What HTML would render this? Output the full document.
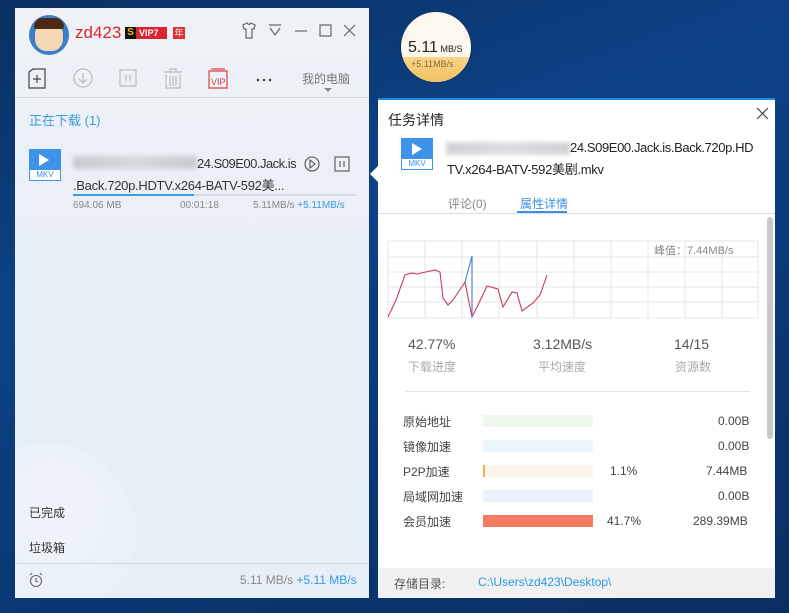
<!DOCTYPE html>
<html><head><meta charset="utf-8"><style>
*{margin:0;padding:0;box-sizing:border-box}
html,body{width:789px;height:613px;overflow:hidden}
body{position:relative;font-family:"Liberation Sans","Noto Sans CJK SC",sans-serif;
background:linear-gradient(160deg,#0a2f62 0%,#0d4286 35%,#0a3a78 60%,#0b2e62 100%);}
.a{position:absolute}
.t{position:absolute;white-space:nowrap}
#left{left:15px;top:8px;width:354px;height:590px;overflow:hidden;background:linear-gradient(180deg,#eef2f7 0%,#e9eff6 40%,#e6eef7 100%);}
#right{left:378px;top:98px;width:397px;height:500px;background:#fff;border-top:2px solid #1e8ae6;}
.gray{color:#888}
</style></head><body>
<div class="a" style="left:401px;top:12px;width:70px;height:70px;border-radius:50%;overflow:hidden;background:#fdf8ee;box-shadow:0 0 2px rgba(0,0,0,.3)">
 <div class="a" style="left:0;top:45px;width:70px;height:25px;background:linear-gradient(#f8d58a,#f3c262)"></div>
 <div class="t" style="left:7px;top:27px;font-size:16px;color:#222">5.11<span style="font-size:9px"> MB/S</span></div>
 <div class="t" style="left:10px;top:47px;font-size:9px;color:#8a6a30">+5.11MB/s</div>
</div>

<div id="left" class="a">
 <div class="a" style="left:-60px;top:435px;width:180px;height:180px;border-radius:50%;background:radial-gradient(circle at 55% 40%,rgba(255,255,255,.35),rgba(220,232,244,.2));"></div>
 <div class="a" style="left:14px;top:7px;width:40px;height:40px;border-radius:50%;background:#3d7ec9"></div>
 <div class="a" style="left:20px;top:13px;width:28px;height:30px;border-radius:45% 45% 40% 40%;background:#f6d8b6"></div>
 <div class="a" style="left:19px;top:10px;width:30px;height:11px;border-radius:12px 12px 3px 3px;background:#4a2a12"></div>
 <div class="t" style="left:60px;top:15px;font-size:17px;color:#d9262f">zd423</div>
 <div class="a" style="left:110px;top:19px;width:42px;height:12px;background:#d9262f"></div>
 <div class="a" style="left:110px;top:19px;width:11px;height:12px;background:#111;color:#f6c000;font-size:10px;font-weight:bold;text-align:center;line-height:12px">S</div>
 <div class="t" style="left:124px;top:19px;font-size:9px;color:#fff;font-weight:bold;line-height:12px">VIP7</div>
 <div class="a" style="left:158px;top:19px;width:12px;height:12px;background:#e03131;color:#fff;font-size:9px;line-height:12px;text-align:center">年</div>
 <svg class="a" style="left:224px;top:14px" width="125" height="18" fill="none" stroke="#666" stroke-width="1.2">
  <path d="M4 3 L8 1 Q10 4 12 1 L16 3 L15 7 L13 7 L13 16 L7 16 L7 7 L5 7 Z"/>
  <path d="M30 3 H42 M31 6 L36 13 L41 6"/>
  <path d="M56 9 H68"/>
  <rect x="81" y="3" width="11" height="11"/>
  <path d="M105 3 L116 14 M116 3 L105 14"/>
 </svg>
 <svg class="a" style="left:10px;top:60px" width="260" height="22" fill="none" stroke-width="1.2">
  <path d="M4 4 L8 1 H20 V20 H4 Z M8 11 H16 M12 7 V15" stroke="#444"/>
  <circle cx="58" cy="10" r="9" stroke="#bbb"/><path d="M58 5 V15 M54 11 L58 15 L62 11" stroke="#bbb"/>
  <rect x="95" y="2" width="16" height="16" stroke="#bbb"/><path d="M101 7 V13 M105 7 V13" stroke="#bbb"/>
  <path d="M139 4 H157 M145 4 V1 H151 V4 M141 6 V20 H155 V6 M145 8 V18 M148 8 V18 M151 8 V18" stroke="#bbb"/>
  <path d="M184 3 H202 V20 H184 Z M186 1 H200" stroke="#e04040"/>
  <text x="186" y="17" font-size="9" fill="#e04040" stroke="none" font-family="Liberation Sans">VIP</text>
  <circle cx="233" cy="12" r="1.3" fill="#444" stroke="none"/><circle cx="239" cy="12" r="1.3" fill="#444" stroke="none"/><circle cx="245" cy="12" r="1.3" fill="#444" stroke="none"/>
 </svg>
 <div class="t" style="left:287px;top:62px;font-size:12px;color:#777">我的电脑</div>
 <div class="a" style="left:309px;top:80px;border:4px solid transparent;border-top:4px solid #888"></div>
 <div class="a" style="left:0;top:89px;width:354px;height:1px;background:#cfd6de"></div>
 <div class="t" style="left:14px;top:102px;font-size:13px;color:#3b9be0">正在下载 (1)</div>
 <div class="a" style="left:14px;top:141px;width:32px;height:32px;background:#3d93e8;border:1px solid #3d93e8"></div>
 <div class="a" style="left:24px;top:146px;border-left:10px solid #fff;border-top:6px solid transparent;border-bottom:6px solid transparent"></div>
 <div class="a" style="left:15px;top:162px;width:30px;height:10px;background:#fff;color:#3d93e8;font-size:8px;text-align:center;line-height:10px">MKV</div>
 <div class="a" style="left:58px;top:148px;width:124px;height:13px;background:linear-gradient(90deg,#c8ccd2,#d6d9dd,#c8ccd2);filter:blur(2px)"></div>
 <div class="t" style="left:182px;top:148px;font-size:13px;letter-spacing:-0.5px;color:#333">24.S09E00.Jack.is</div>
 <div class="t" style="left:58px;top:167px;font-size:13px;letter-spacing:-0.3px;color:#333">.Back.720p.HDTV.x264-BATV-592美...</div>
 <svg class="a" style="left:288px;top:146px" width="50" height="20" fill="none" stroke="#555" stroke-width="1.1">
  <circle cx="9" cy="10" r="7"/><path d="M7 6 L12 10 L7 14 Z"/>
  <rect x="32" y="3" width="14" height="14"/><path d="M37 7 V13 M41 7 V13"/>
 </svg>
 <div class="a" style="left:58px;top:186px;width:283px;height:2px;background:#d5dbe2"></div>
 <div class="a" style="left:58px;top:186px;width:121px;height:2px;background:#3b9be0"></div>
 <div class="t gray" style="left:58px;top:192px;font-size:10px">694.06 MB</div>
 <div class="t gray" style="left:165px;top:192px;font-size:10px">00:01:18</div>
 <div class="t gray" style="left:238px;top:192px;font-size:10px">5.11MB/s <span style="color:#3b9be0">+5.11MB/s</span></div>
 <div class="t" style="left:14px;top:496px;font-size:12px;color:#333">已完成</div>
 <div class="t" style="left:14px;top:531px;font-size:12px;color:#333">垃圾箱</div>
 <div class="a" style="left:0;top:555px;width:354px;height:1px;background:#cfd6de"></div>
 <svg class="a" style="left:13px;top:564px" width="16" height="16" fill="none" stroke="#666" stroke-width="1.1"><circle cx="8" cy="9" r="5.5"/><path d="M8 6 V9 L10 10 M2 3 L4 1 M14 3 L12 1"/></svg>
 <div class="t gray" style="left:225px;top:565px;font-size:12px">5.11 MB/s <span style="color:#3b9be0">+5.11 MB/s</span></div>
</div>
<div class="a" style="left:370px;top:166px;border-right:8px solid #fff;border-top:8px solid transparent;border-bottom:8px solid transparent"></div>

<div id="right" class="a">
 <div class="t" style="left:10px;top:10px;font-size:14px;color:#222">任务详情</div>
 <svg class="a" style="left:378px;top:7px" width="14" height="14" stroke="#444" stroke-width="1.2"><path d="M1 1 L12 12 M12 1 L1 12"/></svg>
 <div class="a" style="left:23px;top:38px;width:32px;height:32px;background:#3d93e8;border:1px solid #3d93e8"></div>
 <div class="a" style="left:34px;top:43px;border-left:10px solid #fff;border-top:6px solid transparent;border-bottom:6px solid transparent"></div>
 <div class="a" style="left:24px;top:59px;width:30px;height:10px;background:#fff;color:#3d93e8;font-size:8px;text-align:center;line-height:10px">MKV</div>
 <div class="a" style="left:68px;top:42px;width:124px;height:13px;background:linear-gradient(90deg,#d0d2d6,#dcdee1,#d0d2d6);filter:blur(2px)"></div>
 <div class="t" style="left:192px;top:40px;font-size:13px;letter-spacing:-0.4px;color:#222">24.S09E00.Jack.is.Back.720p.HD</div>
 <div class="t" style="left:69px;top:59px;font-size:13px;letter-spacing:-0.3px;color:#222">TV.x264-BATV-592美剧.mkv</div>
 <div class="t gray" style="left:70px;top:95px;font-size:12px">评论(0)</div>
 <div class="t" style="left:142px;top:95px;font-size:12px;color:#3b8fe0">属性详情</div>
 <div class="a" style="left:139px;top:111px;width:50px;height:2px;background:#3b8fe0"></div>
 <div class="a" style="left:0;top:113px;width:397px;height:1px;background:#ddd"></div>
 <div class="a" style="left:389px;top:117px;width:6px;height:222px;border-radius:3px;background:#c9c9c9"></div>
 <svg class="a" style="left:0;top:0" width="385" height="230">
  <g stroke="#e6e6e6" stroke-width="1">
   <path d="M10 141 H380 M10 157 H380 M10 172 H380 M10 187 H380 M10 202 H380 M10 218 H380"/>
   <path d="M10 141 V218 M47 141 V218 M84 141 V218 M121 141 V218 M159 141 V218 M196 141 V218 M233 141 V218 M270 141 V218 M307 141 V218 M344 141 V218 M380 141 V218"/>
  </g>
  <polyline fill="none" stroke="#c83c50" stroke-width="1.1" points="10,217 18,200 27,175 34,173 39,174 57,170 62,172 65,198 70,205 75,200 87,182 94,217 101,203 109,186 120,189 125,207 134,192 139,193 144,211 155,203 162,195 169,175"/>
  <polyline fill="none" stroke="#3b7fe0" stroke-width="1.1" points="87,182 94,156 94,217"/>
  <text x="276" y="154" font-size="11" fill="#888" font-family="Liberation Sans,Noto Sans CJK SC,sans-serif">峰值：7.44MB/s</text>
 </svg>
 <div class="t" style="left:30px;top:236px;font-size:14px;color:#555">42.77%</div>
 <div class="t" style="left:30px;top:258px;font-size:12px;color:#aaa">下载进度</div>
 <div class="t" style="left:155px;top:236px;font-size:14px;color:#555">3.12MB/s</div>
 <div class="t" style="left:160px;top:258px;font-size:12px;color:#aaa">平均速度</div>
 <div class="t" style="left:296px;top:236px;font-size:14px;color:#555">14/15</div>
 <div class="t" style="left:297px;top:258px;font-size:12px;color:#aaa">资源数</div>
 <div class="a" style="left:28px;top:291px;width:344px;height:1px;background:#e3e3e3"></div>
 <div class="t" style="left:25px;top:313px;font-size:12px;color:#444">原始地址</div>
 <div class="a" style="left:105px;top:315px;width:110px;height:12px;background:#eef8ec"></div>
 <div class="t" style="left:340px;top:314px;font-size:12px;color:#444">0.00B</div>
 <div class="t" style="left:25px;top:338px;font-size:12px;color:#444">镜像加速</div>
 <div class="a" style="left:105px;top:340px;width:110px;height:12px;background:#edf5fc"></div>
 <div class="t" style="left:340px;top:339px;font-size:12px;color:#444">0.00B</div>
 <div class="t" style="left:25px;top:363px;font-size:12px;color:#444">P2P加速</div>
 <div class="a" style="left:105px;top:365px;width:110px;height:12px;background:#fdf4ea"></div>
 <div class="a" style="left:105px;top:365px;width:2px;height:12px;background:#f0b040"></div>
 <div class="t" style="left:232px;top:364px;font-size:12px;color:#444">1.1%</div>
 <div class="t" style="left:328px;top:364px;font-size:12px;color:#444">7.44MB</div>
 <div class="t" style="left:25px;top:388px;font-size:12px;color:#444">局域网加速</div>
 <div class="a" style="left:105px;top:390px;width:110px;height:12px;background:#eef2fb"></div>
 <div class="t" style="left:340px;top:389px;font-size:12px;color:#444">0.00B</div>
 <div class="t" style="left:25px;top:413px;font-size:12px;color:#444">会员加速</div>
 <div class="a" style="left:105px;top:415px;width:110px;height:12px;background:#f77b62"></div>
 <div class="t" style="left:229px;top:414px;font-size:12px;color:#444">41.7%</div>
 <div class="t" style="left:315px;top:414px;font-size:12px;color:#444">289.39MB</div>
 <div class="a" style="left:0;top:468px;width:397px;height:30px;background:#f0f0f0"></div>
 <div class="t" style="left:16px;top:475px;font-size:12px;color:#555">存储目录:</div>
 <div class="t" style="left:100px;top:475px;font-size:12px;color:#2a9ae0">C:\Users\zd423\Desktop\</div>
</div>
</body></html>
